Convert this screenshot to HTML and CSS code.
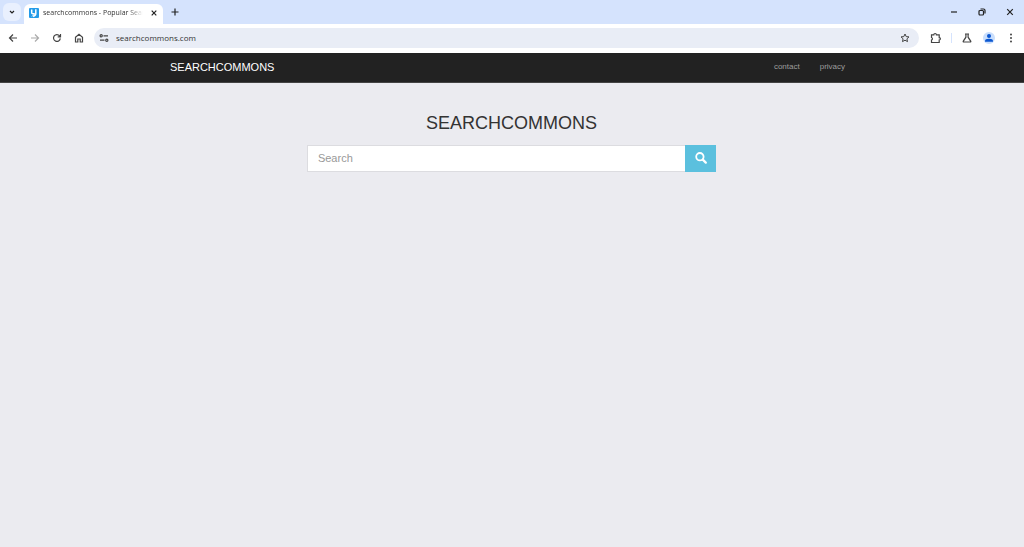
FILE: index.html
```html
<!DOCTYPE html>
<html lang="en">
<head>
<meta charset="utf-8">
<title>searchcommons - Popular Searches</title>
<link rel="stylesheet" href="styles.css">
</head>
<body>
<div class="tabs">
  <button class="tab-search" aria-label="Search tabs"><svg width="8" height="8" viewBox="0 0 8 8"><path d="M2 3l2 2 2-2"/></svg></button>
  <div class="tab">
    <svg width="10" height="10" viewBox="0 0 10 10"><rect width="10" height="10" rx="1" fill="#249be8" stroke="none"/><path d="M2.7 1.5v3.2q0 1 1 1h1.8M6.8 1.3v4.2q0 2-2.7 3" fill="none" stroke="#fff" stroke-width="1.5"/><path d="M3 8.5L6.5 5" stroke="#fff" stroke-width="1"/></svg>
    <span class="tab-title">searchcommons - Popular Sear</span>
    <button class="icon-button" aria-label="Close tab"><svg width="8" height="8" viewBox="0 0 8 8"><path d="M1.7 1.7l4.6 4.6M6.3 1.7L1.7 6.3"/></svg></button>
  </div>
  <button class="icon-button new-tab" aria-label="New tab"><svg width="8" height="8" viewBox="0 0 8 8"><path d="M4 .5v7M.5 4h7"/></svg></button>
  <div class="window-controls">
    <button class="icon-button" aria-label="Minimize"><svg width="8" height="8" viewBox="0 0 8 8"><path d="M1 4h6"/></svg></button>
    <button class="icon-button" aria-label="Restore"><svg width="8" height="8" viewBox="0 0 8 8"><rect x="1" y="2.5" width="4.5" height="4.5" rx="1"/><path d="M2.5 1h3Q7 1 7 2.5v3"/></svg></button>
    <button class="icon-button" aria-label="Close"><svg width="8" height="8" viewBox="0 0 8 8"><path d="M1.2 1.2l5.6 5.6M6.8 1.2L1.2 6.8"/></svg></button>
  </div>
</div>
<div class="toolbar">
  <div class="history">
    <button class="icon-button" aria-label="Back"><svg width="10" height="10" viewBox="0 0 10 10"><path d="M9 5H1.5M5 1.5L1.5 5 5 8.5"/></svg></button>
    <button class="icon-button faded" aria-label="Forward"><svg width="10" height="10" viewBox="0 0 10 10"><path d="M1 5h7.5M5 1.5L8.5 5 5 8.5"/></svg></button>
    <button class="icon-button" aria-label="Reload"><svg width="10" height="10" viewBox="0 0 10 10"><path d="M8.3 5.4A3.4 3.4 0 1 1 7.6 2.9L8.5 3.8M8.5 1v2.8H5.7"/></svg></button>
    <button class="icon-button" aria-label="Home"><svg width="10" height="10" viewBox="0 0 10 10"><path d="M1.5 4.2L5 1.3l3.5 2.9V9H6.2V6H3.8v3H1.5z"/></svg></button>
  </div>
  <div class="address">
    <svg width="10" height="10" viewBox="0 0 10 10"><path d="M4.5 2.8H9M1 7.2h4.5"/><circle cx="2.2" cy="2.8" r="1.1"/><circle cx="7.8" cy="7.2" r="1.1"/></svg>
    <input class="url" type="text" aria-label="Address" value="searchcommons.com">
    <button class="icon-button" aria-label="Bookmark"><svg width="10" height="10" viewBox="0 0 10 10"><path d="M5 1l1.2 2.6 2.8.3L6.9 5.8l.6 2.8L5 7.2 2.5 8.6l.6-2.8L1 3.9l2.8-.3z" stroke-width="1"/></svg></button>
  </div>
  <button class="icon-button extensions" aria-label="Extensions"><svg width="12" height="12" viewBox="0 0 12 12"><path d="M1.5 2.8h2.3a1.3 1.3 0 0 1 2.6 0h2.8v2.8a1.2 1.2 0 0 1 0 2.4v2.5H1.5V8a1.3 1.3 0 0 0 0-2.5z"/></svg></button>
  <span class="divider"></span>
  <div class="tools">
    <button class="icon-button" aria-label="Labs"><svg width="10" height="10" viewBox="0 0 10 10"><path d="M3 1h4M3.9 1v3.2L1.2 8.3Q1 9 1.8 9h6.4Q9 9 8.8 8.3L6.1 4.2V1"/></svg></button>
    <button class="icon-button" aria-label="Profile"><svg width="12" height="12" viewBox="0 0 12 12"><circle cx="6" cy="6" r="6" fill="#c9defc" stroke="none"/><circle cx="6" cy="4" r="2" fill="#0b57d0" stroke="none"/><path d="M2 9.2Q2 6.8 6 6.8t4 2.4v.5H2z" fill="#0b57d0" stroke="none"/></svg></button>
    <button class="icon-button" aria-label="Menu"><svg width="10" height="10" viewBox="0 0 10 10"><g fill="#444" stroke="none"><circle cx="5" cy="1.4" r="1"/><circle cx="5" cy="5" r="1"/><circle cx="5" cy="8.6" r="1"/></g></svg></button>
  </div>
</div>
<header class="navbar">
  <div class="navbar-inner">
    <a class="brand" href="#">SEARCHCOMMONS</a>
    <nav class="links"><a href="#">contact</a><a href="#">privacy</a></nav>
  </div>
</header>
<main class="content">
  <h1 class="title">SEARCHCOMMONS</h1>
  <form class="search">
    <input class="search-box" type="text" placeholder="Search" aria-label="Search">
    <button class="search-button" type="button" aria-label="Search"><svg width="12" height="12" viewBox="0 0 12 12"><circle cx="4.9" cy="4.7" r="3.7" stroke-width="1.8"/><path d="M7.8 7.6l3 3" stroke-width="2.2" stroke-linecap="round"/></svg></button>
  </form>
</main>
</body>
</html>
```
FILE: styles.css
```css
* { box-sizing: border-box; }
body {
  margin: 0;
  min-height: 100vh;
  background: #ebebf0;
  font-family: "Liberation Sans", Arial, sans-serif;
}
button { padding: 0; border: 0; background: none; color: inherit; font: inherit; }
svg { display: block; flex: none; fill: none; stroke: currentColor; stroke-width: 1.2; }
a { text-decoration: none; }

.tabs {
  display: flex;
  align-items: center;
  height: 24px;
  padding-left: 3px;
  background: #d5e3fd;
  color: #222;
}
.tab-search {
  display: grid;
  place-items: center;
  width: 18px;
  height: 18px;
  border-radius: 6px;
  background: #e9f0fe;
}
.tab {
  display: flex;
  align-items: center;
  align-self: flex-end;
  width: 139px;
  height: 20px;
  margin-left: 3px;
  padding: 0 5px 2px;
  border-radius: 6px 6px 0 0;
  background: #fff;
}
.tab-title {
  flex: 1;
  margin: 0 7px 0 4px;
  overflow: hidden;
  white-space: nowrap;
  font: 7px/12px "Open Sans", "Noto Sans", sans-serif;
  color: #333;
  mask-image: linear-gradient(to right, #000 85%, transparent);
}
.icon-button { display: grid; place-items: center; }
.new-tab { margin-left: 8px; }
.window-controls { display: flex; gap: 20px; margin-left: auto; padding-right: 10px; }

.toolbar {
  display: flex;
  align-items: center;
  height: 29px;
  padding: 0 8px 2px;
  background: #fff;
  color: #444;
}
.history { display: flex; gap: 12px; }
.faded { color: #aaa; }
.address {
  display: flex;
  flex: 1;
  align-items: center;
  height: 20px;
  margin-left: 10px;
  padding: 0 9px 0 5px;
  border-radius: 10px;
  background: #e9edf6;
}
.url {
  flex: 1;
  min-width: 0;
  margin-left: 7px;
  padding: 0;
  border: 0;
  background: none;
  color: #333;
  font: 8px/16px "Open Sans", "Noto Sans", sans-serif;
}
.extensions { margin-left: 11px; }
.divider { width: 1px; height: 10px; margin: 0 10px 0 9px; background: #d5e3fd; }
.tools { display: flex; align-items: center; gap: 11px; }

.navbar { border-bottom: 1px solid #444; background: #222; }
.navbar-inner {
  display: flex;
  align-items: center;
  justify-content: space-between;
  width: 67%;
  min-height: 29px;
  margin: 0 auto;
  padding: 0 10px 2px 1px;
}
.brand { font-size: 11px; line-height: 16px; color: #fff; }
.links { display: flex; gap: 20px; font-size: 8px; line-height: 12px; }
.links a { color: #9d9d9d; }

.content { padding: 28px 1px 0 0; }
.title {
  margin: 0 0 10px;
  color: #333;
  font-size: 18px;
  font-weight: 400;
  line-height: 24px;
  text-align: center;
}
.search { display: flex; width: 40%; height: 27px; margin: 0 auto; }
.search-box {
  flex: 1;
  min-width: 0;
  padding: 0 10px 2px;
  border: 1px solid #dcdce0;
  border-right: 0;
  border-radius: 0;
  background: #fff;
  font: 11px/16px "Liberation Sans", Arial, sans-serif;
}
.search-box::placeholder { color: #999; }
.search-button {
  display: grid;
  place-items: center;
  width: 31px;
  padding-bottom: 2px;
  background: #5bc0de;
  color: #fff;
}
```
